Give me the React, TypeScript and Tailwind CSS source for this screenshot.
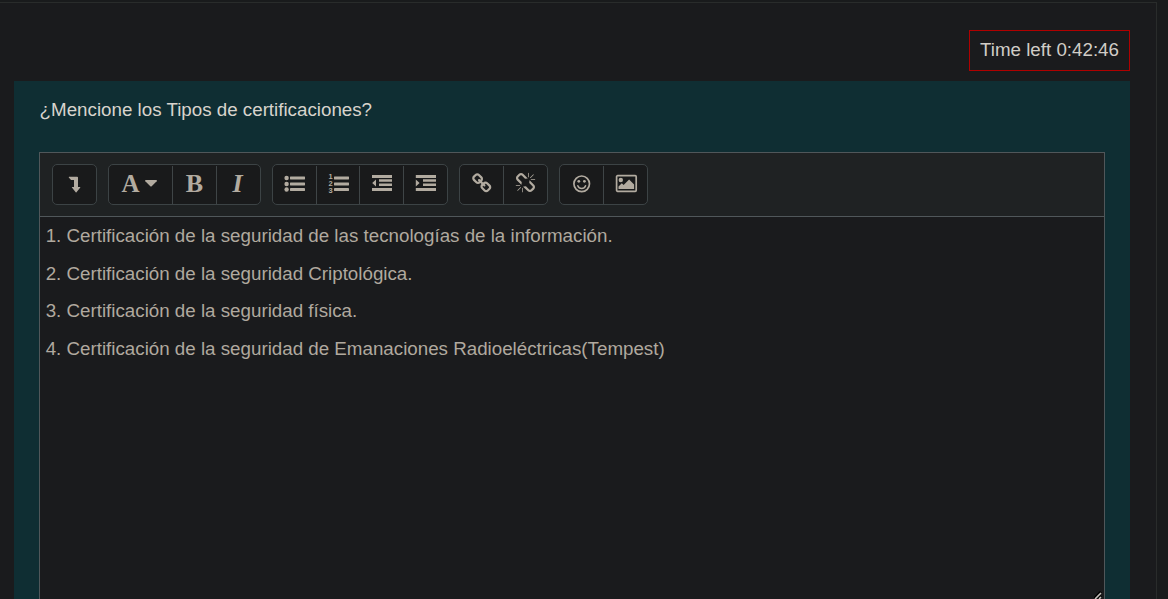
import type { ReactNode } from "react";

function Icon({ children }: { children: ReactNode }) {
  return (
    <svg className="h-[21px] w-[21px] shrink-0 overflow-visible" viewBox="0 0 21 21" fill="currentColor">
      {children}
    </svg>
  );
}

function Group({ children }: { children: ReactNode }) {
  return (
    <div className="flex h-[41px] items-stretch rounded-[5px] border border-[#3c4345] bg-[#191a1b]">
      {children}
    </div>
  );
}

function Tool({
  label,
  width = "w-[43px]",
  divided = false,
  children,
}: {
  label: string;
  width?: string;
  divided?: boolean;
  children: ReactNode;
}) {
  return (
    <>
      {divided && <span className="mt-px w-px bg-[#3f4547]" />}
      <button type="button" aria-label={label} className={`flex items-center justify-center ${width}`}>
        {children}
      </button>
    </>
  );
}

const LINK =
  "M1456 1216q0-40-28-68l-208-208q-28-28-68-28-42 0-72 32 3 3 19 18.5t21.5 21.5 15 19 13 25.5 3.5 27.5q0 40-28 68t-68 28q-15 0-27.5-3.5t-25.5-13-19-15-21.5-21.5-18.5-19q-33 31-33 73 0 40 28 68l206 207q27 27 68 27 40 0 68-26l147-146q28-28 28-67zm-703-705q0-40-28-68l-206-207q-28-28-68-28-39 0-68 27l-147 146q-28 28-28 67 0 40 28 68l208 208q27 27 68 27 42 0 72-31-3-3-19-18.5t-21.5-21.5-15-19-13-25.5-3.5-27.5q0-40 28-68t68-28q15 0 27.5 3.5t25.5 13 19 15 21.5 21.5 18.5 19q33-31 33-73zm895 705q0 120-85 203l-147 146q-83 83-203 83-121 0-204-85l-206-207q-83-83-83-203 0-123 88-209l-88-88q-86 88-208 88-120 0-204-84l-208-208q-84-84-84-204t85-203l147-146q83-83 203-83 121 0 204 85l206 207q83 83 83 203 0 123-88 209l88 88q86-88 208-88 120 0 204 84l208 208q84 84 84 204z";
const UNLINK =
  "M503 1271l-256 256q-10 9-23 9-12 0-23-9-9-10-9-23t9-23l256-256q10-9 23-9t23 9q9 10 9 23t-9 23zm169 41v320q0 14-9 23t-23 9-23-9-9-23v-320q0-14 9-23t23-9 23 9 9 23zm-224-224q0 14-9 23t-23 9h-320q-14 0-23-9t-9-23 9-23 23-9h320q14 0 23 9t9 23zm1264 128q0 120-85 203l-147 146q-83 83-203 83-121 0-204-85l-334-335q-21-21-42-56l239-18 273 274q28 28 68 27.5t68-27.5l147-146q28-28 28-67 0-40-28-68l-274-275 18-239q35 21 56 42l336 336q84 86 84 204zm-617-724l-239 18-273-274q-28-28-68-28-39 0-68 27l-147 146q-28 28-28 67 0 40 28 68l274 274-18 240q-35-21-56-42l-336-336q-84-86-84-204 0-120 85-203l147-146q83-83 203-83 121 0 204 85l334 335q21 21 42 56zm633 84q0 14-9 23t-23 9h-320q-14 0-23-9t-9-23 9-23 23-9h320q14 0 23 9t9 23zm-544-544v320q0 14-9 23t-23 9-23-9-9-23v-320q0-14 9-23t23-9 23 9 9 23zm407 151l-256 256q-11 9-23 9t-23-9q-9-10-9-23t9-23l256-256q10-9 23-9t23 9q9 10 9 23t-9 23z";

const LINES = [
  "1. Certificación de la seguridad de las tecnologías de la información.",
  "2. Certificación de la seguridad Criptológica.",
  "3. Certificación de la seguridad física.",
  "4. Certificación de la seguridad de Emanaciones Radioeléctricas(Tempest)",
];

function Toolbar() {
  return (
    <div className="flex h-[64px] shrink-0 gap-[11px] border-b border-[#50575a] bg-[#1f2223] px-3 py-[11px] text-[#b2aba0]">
      <Group>
        <Tool label="Mostrar más botones">
          <Icon>
            <path d="M5.2 2.8h8q.8 0 .8.7V13h2q.7 0 .3.6l-3.8 4.6q-.4.5-.8 0l-3.8-4.6q-.4-.6.3-.6H10V6H7.4q-.4 0-.6-.3L4.8 3.4q-.3-.6.4-.6z" />
          </Icon>
        </Tool>
      </Group>
      <Group>
        <Tool label="Estilos de párrafo" width="w-[63px] pr-[3px] pb-[2px]">
          <span className="font-['Liberation_Serif',serif] text-[25px] leading-none font-bold">A</span>
          <svg className="ml-[5px] h-[7px] w-3" viewBox="0 0 12 7" fill="currentColor">
            <path d="M.7 0h10.6q1 .3.4 1.2L6.7 6.3q-.7.6-1.4 0L.3 1.2Q-.2.3.7 0z" />
          </svg>
        </Tool>
        <Tool label="Negrita" width="w-[43px] pb-[2px]" divided>
          <span className="font-['Liberation_Serif',serif] text-[26px] leading-none font-bold">B</span>
        </Tool>
        <Tool label="Cursiva" width="w-[43px] pr-[2px] pb-[2px]" divided>
          <span className="font-['Liberation_Serif',serif] text-[26px] leading-none font-bold italic">I</span>
        </Tool>
      </Group>
      <Group>
        <Tool label="Lista">
          <Icon>
            {[4, 10, 15.5].map((y) => (
              <g key={y}>
                <circle cx="2.6" cy={y} r="2.2" />
                <rect x="6" y={y - 1.5} width="15" height="3" rx=".4" />
              </g>
            ))}
          </Icon>
        </Tool>
        <Tool label="Lista numerada" width="w-[42px]" divided>
          <Icon>
            {[5.2, 12.3, 19.4].map((y, i) => (
              <text key={y} x=".4" y={y} fontSize="7.5" fontWeight="bold" fontFamily="Liberation Sans, sans-serif">
                {i + 1}
              </text>
            ))}
            {[2.5, 8.5, 14].map((y) => (
              <rect key={y} x="6" y={y} width="15" height="3" rx=".4" />
            ))}
          </Icon>
        </Tool>
        <Tool label="Reducir sangría" divided>
          <Icon>
            <path d="M1 1h20v3H1zM8 5.2h13v2.6H8zM8 9.5h13v2.6H8zM1 14h20v3H1zM5 5.4v7.2L1.2 9z" />
          </Icon>
        </Tool>
        <Tool label="Aumentar sangría" divided>
          <Icon>
            <path d="M.8 1H21v3H.8zM8 5.2h13v2.6H8zM8 9.5h13v2.6H8zM.8 14H21v3H.8zM.8 5.4v7.2L4.6 9z" />
          </Icon>
        </Tool>
      </Group>
      <Group>
        <Tool label="Enlace">
          <Icon>
            <path transform="translate(1 -1) scale(0.0117)" d={LINK} />
          </Icon>
        </Tool>
        <Tool label="Quitar enlace" divided>
          <Icon>
            <path transform="translate(0 -1.2) scale(0.0117)" d={UNLINK} />
          </Icon>
        </Tool>
      </Group>
      <Group>
        <Tool label="Emoticonos">
          <Icon>
            <circle cx="10.7" cy="9.8" r="7.8" fill="none" stroke="currentColor" strokeWidth="1.7" />
            <circle cx="7.8" cy="7.3" r="1.4" />
            <circle cx="13.4" cy="7.3" r="1.4" />
            <path d="M6.8 11.8q1.1 2.8 3.9 2.8t3.9-2.8" fill="none" stroke="currentColor" strokeWidth="1.5" strokeLinecap="round" />
          </Icon>
        </Tool>
        <Tool label="Imagen" divided>
          <Icon>
            <rect x="1.6" y="1.7" width="19.6" height="15.6" rx="1" fill="none" stroke="currentColor" strokeWidth="1.7" />
            <circle cx="5.8" cy="6" r="2.2" />
            <path d="M3.5 15v-2.4l3.3-3.3 1.8 1.8 5.5-5.5 5 5V15z" />
          </Icon>
        </Tool>
      </Group>
    </div>
  );
}

export default function App() {
  return (
    <div className="h-[599px] w-[1168px] overflow-hidden bg-[#191b1c] pt-[2px] font-['Liberation_Sans',sans-serif] text-[18.75px]">
      <div className="flex h-[597px] w-[1157px] flex-col border-t border-r border-[#292c2b] bg-[#1a1b1d] pt-[27px] pr-[26px] pl-[14px]">
        <div className="flex h-[41px] w-[161px] shrink-0 items-center justify-center self-end border border-[#b00000] whitespace-nowrap text-[#d1cdc7]">
          Time left 0:42:46
        </div>
        <main className="mt-[10px] flex flex-1 flex-col bg-[#0f2e33] px-[25px] pt-[15px]">
          <p className="h-[56px] shrink-0 pl-[0.6px] leading-[28px] text-[#d8d4cd]">¿Mencione los Tipos de certificaciones?</p>
          <section className="relative flex flex-1 flex-col border-x border-t border-[#50575a] bg-[#1a1b1d]">
            <Toolbar />
            <div className="px-[5.65px] pt-[5px] text-[#b0a99f]">
              {LINES.map((line) => (
                <p key={line} className="mb-[9.4px] leading-[28.125px]">
                  {line}
                </p>
              ))}
            </div>
            <svg className="absolute right-[2px] bottom-0 h-[8px] w-[8px]" viewBox="0 0 8 8" fill="none">
              <path d="M0 8 7 1M4 8 7 5" stroke="#000" strokeWidth="3" />
              <path d="M1 8 7 2M5 8 7 6" stroke="#c5c2bc" strokeWidth="1.6" />
            </svg>
          </section>
        </main>
      </div>
    </div>
  );
}
